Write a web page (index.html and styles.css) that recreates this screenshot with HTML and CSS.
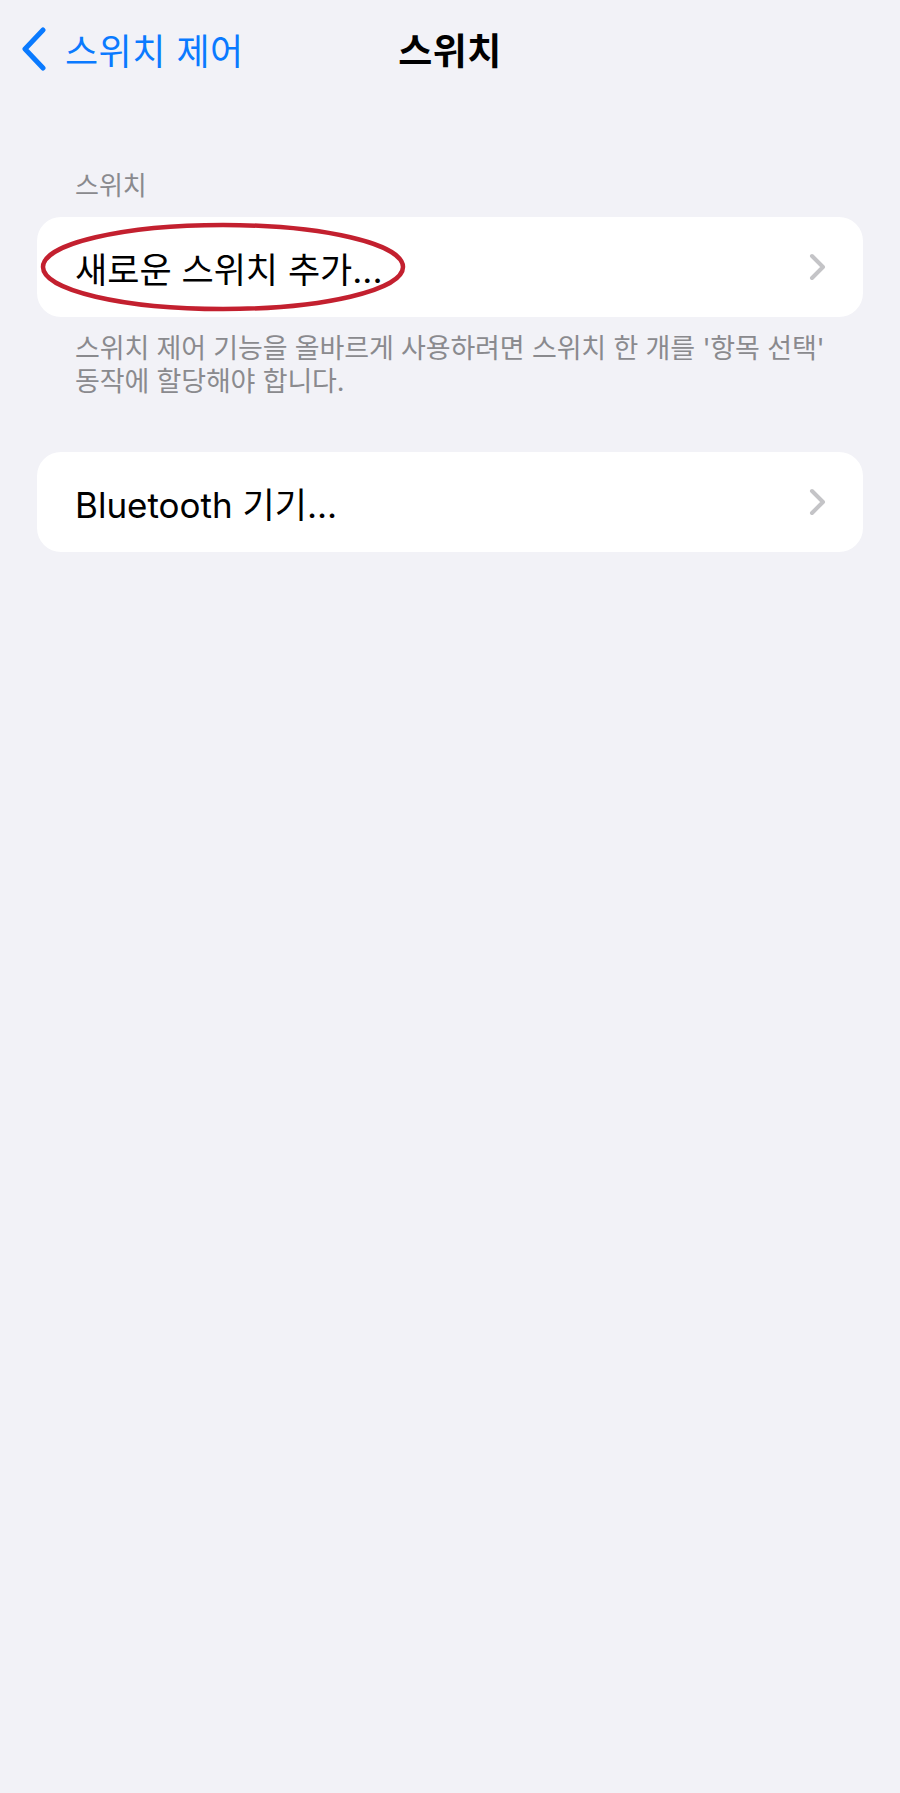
FILE: index.html
```html
<!DOCTYPE html>
<html lang="ko">
<head>
  <meta charset="UTF-8" />
  <meta name="viewport" content="width=device-width, initial-scale=1.0"/>
  <title>스위치</title>
  <link rel="stylesheet" href="styles.css">
</head>
<body>
  <header class="nav">
    <a class="back" href="#">
      <svg class="back-icon" width="26" height="44" viewBox="0 0 26 44">
        <path d="M22 3 L4 22 L22 41" fill="none" stroke="#0a7aff" stroke-width="5" stroke-linecap="round" stroke-linejoin="round"/>
      </svg>
      <span>스위치 제어</span>
    </a>
    <h1 class="title">스위치</h1>
    <div></div>
  </header>

  <main class="content">
    <div class="section-header">스위치</div>
    <div class="card">
      <a class="row" href="#">
        <span class="row-label">새로운 스위치 추가...</span>
        <svg class="chevron" width="18" height="28" viewBox="0 0 18 28">
          <path d="M3 3 L14 14 L3 25" fill="none" stroke="#c4c4c7" stroke-width="4" stroke-linecap="round" stroke-linejoin="round"/>
        </svg>
      </a>
      <svg class="mark" width="370" height="92" viewBox="0 0 370 92">
        <ellipse cx="184" cy="46" rx="180" ry="42" fill="none" stroke="#c3202f" stroke-width="4.5"/>
      </svg>
    </div>
    <p class="section-footer">스위치 제어 기능을 올바르게 사용하려면 스위치 한 개를 '항목 선택' 동작에 할당해야 합니다.</p>

    <div class="card card-gap">
      <a class="row" href="#">
        <span class="row-label">Bluetooth 기기...</span>
        <svg class="chevron" width="18" height="28" viewBox="0 0 18 28">
          <path d="M3 3 L14 14 L3 25" fill="none" stroke="#c4c4c7" stroke-width="4" stroke-linecap="round" stroke-linejoin="round"/>
        </svg>
      </a>
    </div>
  </main>
</body>
</html>
```

FILE: styles.css
```css
body {
  margin: 0;
  background-color: #f2f2f7;
  font-family: "Inter", "Noto Sans CJK KR", sans-serif;
  color: #000;
}

a {
  color: inherit;
  text-decoration: none;
}

.nav {
  display: grid;
  grid-template-columns: 1fr auto 1fr;
  align-items: center;
  height: 98px;
}

.back {
  display: flex;
  align-items: center;
  gap: 18px;
  padding-left: 21px;
  color: #0a7aff;
  font-size: 36px;
  letter-spacing: 0.5px;
}

.back-icon {
  display: block;
}

.title {
  margin: 0;
  font-size: 37px;
  font-weight: 700;
  letter-spacing: 0.5px;
}

.content {
  padding: 0 37px;
}

.section-header {
  margin-top: 72px;
  padding-left: 38px;
  font-size: 26px;
  line-height: 32px;
  color: #8a8a8e;
}

.card {
  position: relative;
  margin-top: 15px;
  background: #fff;
  border-radius: 24px;
}

.card-gap {
  margin-top: 54px;
}

.row {
  display: flex;
  align-items: center;
  justify-content: space-between;
  height: 100px;
  padding: 0 36px 0 38px;
  font-size: 35px;
}

.chevron {
  display: block;
}

.mark {
  position: absolute;
  left: 2px;
  top: 4px;
  pointer-events: none;
}

.section-footer {
  margin: 15px 0 0;
  padding: 0 30px 0 38px;
  font-size: 27px;
  line-height: 33px;
  letter-spacing: -0.15px;
  color: #8a8a8e;
}
```
